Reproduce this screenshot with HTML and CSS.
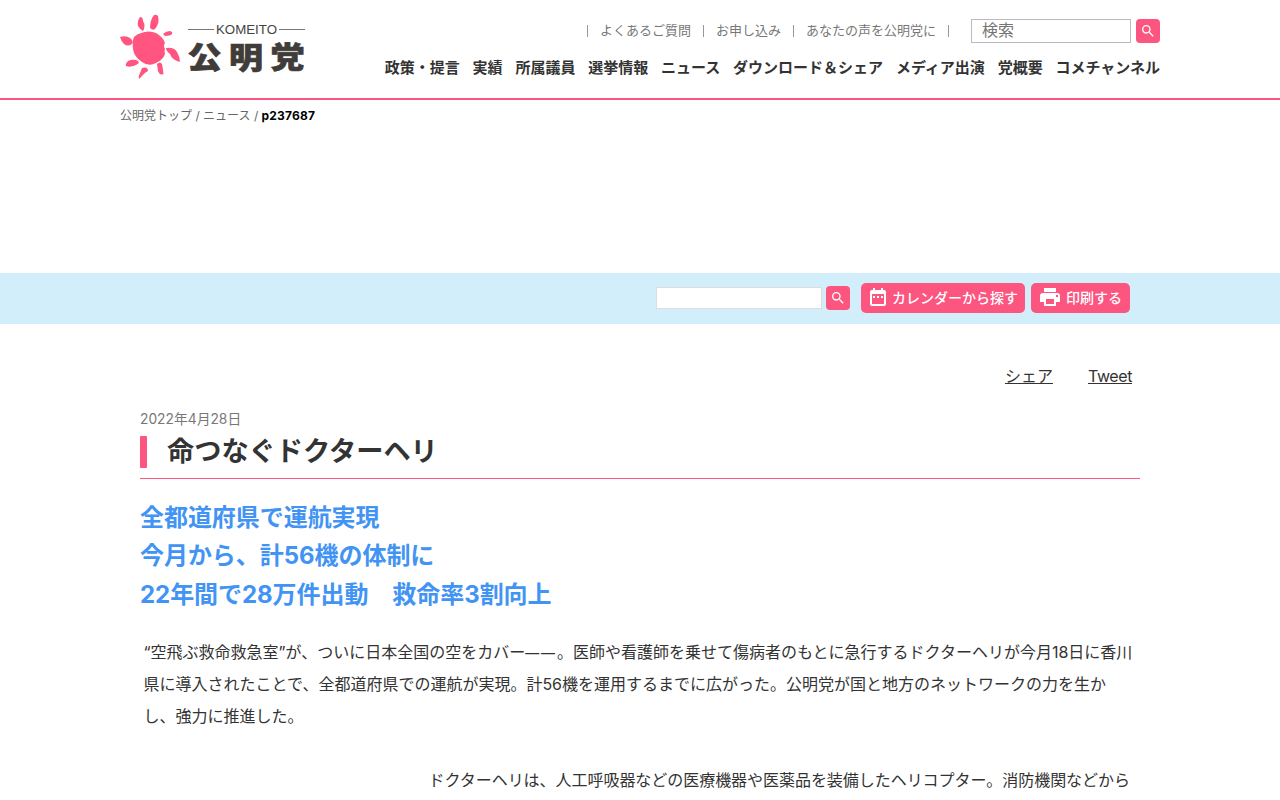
FILE: index.html
```html
<!DOCTYPE html>
<html lang="ja">
<head>
  <meta charset="UTF-8">
  <meta name="viewport" content="width=device-width, initial-scale=1">
  <title>命つなぐドクターヘリ | ニュース | 公明党</title>
  <link rel="stylesheet" href="styles.css">
</head>
<body>

  <header class="header">
    <div class="header-inner">
      <a class="logo" href="#" aria-label="公明党">
        <svg width="186" height="66" viewBox="120 14 186 66">
          <g fill="#ff5580">
            <path d="M141 33Q149 30 156 33Q163 37 165 43Q163 46 165 49Q164 51 165 54Q163 60 156 63Q149 67 142 62Q134 57 133 49Q132 41 134 37Q137 34 141 33Z"/>
            <path d="M140 17Q137 21 138 26Q140 30 143 31Q146 26 143 21Q143 17 140 17Z"/>
            <path d="M154 15Q150 20 150 28Q153 31 155 29Q160 23 158 16Q156 14 154 15Z"/>
            <path d="M163 34Q166 31 170 31Q174 32 171 35Q168 36 165 36Z"/>
            <path d="M166 48Q174 47 177 52Q180 57 180 62Q172 60 170 54Q166 51 166 48Z"/>
            <path d="M157 64Q160 61 162 64Q163 69 163.500 74Q160 76 158 71Z"/>
            <path d="M142 68Q148 66 148 71Q144 73 142 76L139 79Q138 76 140 73Z"/>
            <path d="M136 60Q140 61 138 64Q131 68 126 66Q125 64 128 61Q132 59 136 60Z"/>
            <path d="M120 37Q126 35 130 38Q134 41 132 44Q128 47 124 44Q121 41 120 37Z"/>
          </g>
          <path d="M188 29.500H214M279 29.500H305" stroke="#777" stroke-width="1"/>
          <text class="logo-en" x="216" y="34" textLength="61" lengthAdjust="spacingAndGlyphs">KOMEITO</text>
          <text class="logo-ja" transform="scale(1 .87)" x="187.500 229 270.500" y="78">公明党</text>
        </svg>
      </a>

      <div class="header-nav">
        <div class="header-top">
          <ul class="sub-nav">
            <li><a href="#">よくあるご質問</a></li>
            <li><a href="#">お申し込み</a></li>
            <li><a href="#">あなたの声を公明党に</a></li>
          </ul>
          <form class="search">
            <input type="text" placeholder="検索">
            <button type="button" class="search-btn" aria-label="検索">
              <svg width="16" height="16" viewBox="0 0 24 24"><path d="M15.500 14h-.79l-.28-.27A6.470 6.470 0 0 0 16 9.500 6.500 6.500 0 1 0 9.500 16c1.610 0 3.090-.59 4.230-1.570l.27.28v.79l5 4.990L20.490 19l-4.990-5zm-6 0a4.500 4.500 0 1 1 0-9 4.500 4.500 0 0 1 0 9z"/></svg>
            </button>
          </form>
        </div>
        <ul class="main-nav">
          <li><a href="#">政策・提言</a></li>
          <li><a href="#">実績</a></li>
          <li><a href="#">所属議員</a></li>
          <li><a href="#">選挙情報</a></li>
          <li><a href="#">ニュース</a></li>
          <li><a href="#">ダウンロード＆シェア</a></li>
          <li><a href="#">メディア出演</a></li>
          <li><a href="#">党概要</a></li>
          <li><a href="#">コメチャンネル</a></li>
        </ul>
      </div>
    </div>
  </header>

  <div class="breadcrumb">
    <a href="#">公明党トップ</a> / <a href="#">ニュース</a> / <strong>p237687</strong>
  </div>

  <!-- ニュース検索バー -->
  <div class="news-bar">
    <div class="news-bar-inner">
      <form class="news-search">
        <input type="text" aria-label="ニュース検索">
        <button type="button" class="search-btn" aria-label="検索">
          <svg width="16" height="16" viewBox="0 0 24 24"><path d="M15.500 14h-.79l-.28-.27A6.470 6.470 0 0 0 16 9.500 6.500 6.500 0 1 0 9.500 16c1.610 0 3.090-.59 4.230-1.570l.27.28v.79l5 4.990L20.490 19l-4.990-5zm-6 0a4.500 4.500 0 1 1 0-9 4.500 4.500 0 0 1 0 9z"/></svg>
        </button>
      </form>
      <a class="btn btn-calendar" href="#">
        <svg width="16" height="18" viewBox="0 0 16 18"><path fill-rule="evenodd" d="M3 0h2v2h6V0h2v2h1q2 0 2 2v12q0 2-2 2H2q-2 0-2-2V4q0-2 2-2h1zM2 6v10h12V6zM3 8h2v2H3zM7 8h2v2H7zM11 8h2v2h-2z"/></svg>
        <span>カレンダーから探す</span>
      </a>
      <a class="btn btn-print" href="#">
        <svg width="20" height="18" viewBox="0 0 20 18"><path fill-rule="evenodd" d="M4 0h12v4H4zM3 5h14q3 0 3 3v6h-4v4H4v-4H0V8q0-3 3-3zM6 11v5h8v-5zM16 7v2h2V7z"/></svg>
        <span>印刷する</span>
      </a>
    </div>
  </div>

  <main class="article">
    <div class="share">
      <a href="#">シェア</a>
      <a class="tweet" href="#">Tweet</a>
    </div>

    <p class="date">2022年4月28日</p>
    <h1 class="title">命つなぐドクターヘリ</h1>

    <h2 class="lead">全都道府県で運航実現<br>今月から、計56機の体制に<br>22年間で28万件出動　救命率3割向上</h2>

    <div class="body">
      <p>“空飛ぶ救命救急室”が、ついに日本全国の空をカバー<span class="dash">——</span>。医師や看護師を乗せて傷病者のもとに急行するドクターヘリが今月18日に香川県に導入されたことで、全都道府県での運航が実現。計56機を運用するまでに広がった。公明党が国と地方のネットワークの力を生かし、強力に推進した。</p>
      <p class="beside-photo">ドクターヘリは、人工呼吸器などの医療機器や医薬品を装備したヘリコプター。消防機関などから</p>
    </div>
  </main>

</body>
</html>
```
FILE: styles.css
```css
* {
  box-sizing: border-box;
}

html {
  overflow: hidden;
}

body {
  margin: 0;
  height: 800px;
  overflow: hidden;
  font-family: Inter, "Noto Sans CJK JP", sans-serif;
  font-size: 16px;
  color: #333;
  background: #fff;
}

a {
  color: inherit;
  text-decoration: none;
}

ul, p, h1, h2 {
  margin: 0;
  padding: 0;
  list-style: none;
}

/* ヘッダー */
.header {
  height: 100px;
  border-bottom: 2px solid #fb5580;
}

.header-inner {
  display: flex;
  justify-content: space-between;
  width: 1040px;
  margin: 0 auto;
}

.logo {
  padding-top: 14px;
}

.logo svg {
  display: block;
}

.logo-en {
  font-family: "Liberation Sans", sans-serif;
  font-size: 13px;
  fill: #444;
}

.logo-ja {
  font-family: "Noto Sans CJK JP", sans-serif;
  font-size: 34px;
  font-weight: 900;
  fill: #403c3a;
  stroke: #403c3a;
  stroke-width: .8px;
}

.header-top {
  display: flex;
  justify-content: flex-end;
  align-items: center;
  margin-top: 19px;
  height: 24px;
}

.sub-nav {
  display: flex;
  margin-right: 22px;
  font-size: 13px;
  line-height: 13px;
  color: #777;
}

.sub-nav li {
  padding: 0 12px;
  border-right: 1px solid #999;
}

.sub-nav li:first-child {
  border-left: 1px solid #999;
}

.sub-nav a {
  display: block;
  margin-top: -1px;
}

.search {
  display: flex;
  gap: 5px;
}

.search input {
  width: 160px;
  height: 24px;
  padding: 0 10px 2px;
  border: 1px solid #bbb;
  font: inherit;
}

.search input::placeholder {
  color: #757575;
}

.search-btn {
  display: flex;
  align-items: center;
  justify-content: center;
  width: 24px;
  height: 24px;
  padding: 0;
  border: 0;
  border-radius: 4px;
  background: #fb5580;
  fill: #fff;
}

.main-nav {
  display: flex;
  justify-content: flex-end;
  gap: 12.8px;
  margin-top: 14px;
  font-size: 15px;
  font-weight: bold;
  line-height: 22px;
}

.breadcrumb {
  width: 1040px;
  height: 173px;
  margin: 0 auto;
  padding-top: 7px;
  font-size: 12px;
  line-height: 18px;
  color: #666;
}

.breadcrumb strong {
  letter-spacing: .2px;
  color: #000;
}

/* 検索バー */
.news-bar {
  height: 51px;
  background: #d3eefb;
}

.news-bar-inner {
  display: flex;
  justify-content: flex-end;
  align-items: center;
  width: 980px;
  height: 50px;
  margin: 0 auto;
}

.news-search {
  display: flex;
  align-items: center;
  gap: 4px;
  margin-right: 11px;
}

.news-search input {
  width: 166px;
  height: 22px;
  border: 1px solid #ddd;
}

.btn {
  display: flex;
  align-items: center;
  height: 30px;
  padding-bottom: 2px;
  border-radius: 5px;
  background: #fb5580;
  color: #fff;
  fill: #fff;
  font-size: 14px;
  font-weight: 500;
}

.btn-calendar {
  width: 164px;
  margin-right: 6px;
  padding-left: 9px;
  gap: 6px;
}

.btn-print {
  width: 99px;
  padding-left: 9px;
  gap: 6px;
}

/* 記事 */
.article {
  width: 1000px;
  margin: 0 auto;
}

.share {
  display: flex;
  justify-content: flex-end;
  gap: 35px;
  padding: 40px 8px 0 0;
  line-height: 24px;
}

.share a {
  text-decoration: underline;
}

.share .tweet {
  letter-spacing: -.4px;
}

.date {
  margin-top: 21px;
  font-size: 13.8px;
  line-height: 20px;
  color: #777;
}

.title {
  display: flex;
  align-items: flex-start;
  height: 50px;
  padding-top: 4px;
  border-bottom: 1px solid #fb5580;
  font-size: 27.2px;
  line-height: 38px;
}

.title::before {
  content: "";
  width: 7px;
  height: 32px;
  margin: 3px 20px 0 0;
  border-radius: 1px;
  background: #fb5580;
}

.lead {
  margin-top: 20px;
  font-size: 24px;
  line-height: 38.4px;
  letter-spacing: -.05px;
  color: #4294f4;
}

.body {
  padding: 22px 5px 0 3.500px;
  line-height: 32px;
}

.dash {
  font-size: 14px;
  font-weight: 500;
  line-height: 1;
  letter-spacing: 1.8px;
}

.beside-photo {
  margin-top: 32px;
  padding-left: 285px;
  letter-spacing: -.04px;
  white-space: nowrap;
}
```
